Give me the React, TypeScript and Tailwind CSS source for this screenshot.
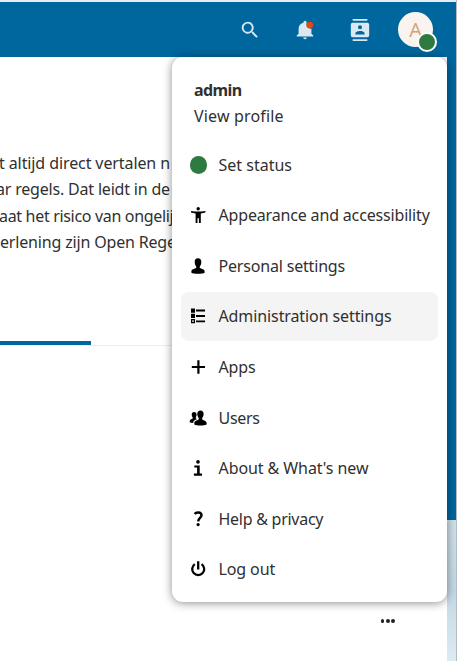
import React from "react";

type Item = { label: string; icon: React.ReactNode; text: string; active?: boolean };

const svg = (children: React.ReactNode) => (
  <svg viewBox="0 0 16 16" className="h-4 w-4 overflow-visible" fill="black">
    {children}
  </svg>
);

const items: Item[] = [
  { label: "Set status", text: "tracking-[0px]", icon: <span className="ml-px block h-[17.5px] w-[17.5px] rounded-full bg-[#2d7b41]" /> },
  {
    label: "Appearance and accessibility",
    text: "tracking-[-0.165px]",
    icon: svg(
      <>
        <circle cx="8.2" cy="1.7" r="1.7" />
        <path d="M1 3.900Q8.200 5.200 15.400 3.900V5.400L10.800 6.400V16H8.900V11.200H7.500V16H5.600V6.400L1 5.400Z" />
      </>,
    ),
  },
  {
    label: "Personal settings",
    text: "tracking-[-0.18px]",
    icon: svg(<path d="M8 .2C5.8.2 4.700 1.600 4.700 3.700c0 2 .5 3.700 1.500 4.800v1.600C4.500 11 1.400 11.400 1.400 13.400v1.300C3 16.100 13 16.100 14.600 14.700v-1.300c0-2-3.100-2.400-4.800-3.300V8.500c1-1.100 1.500-2.800 1.500-4.800C11.300 1.600 10.200.2 8 .2Z" />),
  },
  {
    label: "Administration settings",
    text: "tracking-[-0.1px]",
    active: true,
    icon: svg(
      <>
        <path d="M1 .5h4v4.200H1zM1 5.800h4V10H1zM6 1.600H15v1.900H6zM6 7H15v1.900H6zM6 12.400H15v1.900H6z" />
        <path d="M1.650 11.700h2.700v3H1.650z" fill="none" stroke="black" strokeWidth="1.300" />
      </>,
    ),
  },
  { label: "Apps", text: "tracking-[-0.1px]", icon: svg(<path d="M7.300 1.200h2.200V6.900H15V9.100H9.500v5.700H7.300V9.100H1.800V6.900H7.300Z" />) },
  {
    label: "Users",
    text: "tracking-[-0.3px]",
    icon: svg(
      <>
        <path d="M10.400.5C8.300.5 7.300 1.800 7.300 3.700c0 1.800.5 3.200 1.400 4.200v1.700C7 10.500 4.300 11 4.300 13v1.400c2.500 1.300 9.700 1.300 12.300 0V13c0-2-2.800-2.500-4.400-3.400V7.900c.9-1 1.400-2.400 1.400-4.200 0-1.900-1.100-3.200-3.200-3.200Z" />
        <path d="M3.900 2C2.500 2 1.700 3 1.700 4.400c0 1.300.4 2.300 1 3v1.200C1.500 9.300-.3 9.800-.3 11.200v1c.8.5 2 .7 3.400.8.200-2 1.800-3 4-3.900L5.800 8.600V7.400c.4-.6.700-1.400.8-2.300C6.700 3 5.700 2 3.900 2Z" />
      </>,
    ),
  },
  {
    label: "About & What's new",
    text: "tracking-[-0.08px]",
    icon: svg(
      <>
        <circle cx="8" cy="1.900" r="1.800" />
        <path d="M4.300 5.400h5.400v8.100h2.300v2.200H3.900v-2.200h3.200v-5.900H4.300Z" />
      </>,
    ),
  },
  {
    label: "Help & privacy",
    text: "tracking-[-0.26px]",
    icon: svg(
      <>
        <path d="M4.700 3C5.500 1.900 7 1.500 8.500 1.600c2 .1 3.100 1 3 2.800-.1 2.400-3.100 2.600-3.300 5.900" fill="none" stroke="black" strokeWidth="2.500" />
        <circle cx="8.100" cy="13.600" r="1.600" />
      </>,
    ),
  },
  {
    label: "Log out",
    text: "tracking-[-0.12px]",
    icon: svg(<path d="M8.200 .3V8.500M4.800 3.100A6 6 0 1 0 11.600 3.100" fill="none" stroke="black" strokeWidth="2.300" />),
  },
];

export default function App() {
  return (
    <div className="relative flex h-[661px] w-[457px] flex-col overflow-hidden bg-white font-['Noto_Sans','Open_Sans',sans-serif] text-[#303030]">
      <div className="h-[2px] shrink-0 bg-[#e6eef2]" />
      <header className="flex h-[55px] shrink-0 items-center bg-[#00679e] pl-[239px]">
        <svg viewBox="0 0 24 24" className="h-[22px] w-[22px]" fill="#d9e8f1">
          <path d="M9.500 3a6.500 6.500 0 0 1 4.940 10.730l.27.270h.790l5 5-1.500 1.500-5-5v-.790l-.270-.270A6.500 6.500 0 1 1 9.500 3m0 2a4.500 4.500 0 1 0 0 9 4.500 4.500 0 0 0 0-9Z" />
        </svg>
        <svg viewBox="0 0 24 24" className="ml-[33px] h-[22px] w-[22px]" fill="#d9e8f1">
          <path d="M21 18v1.200H3V18l2-2v-5.500C5 7.400 7.300 4.900 10.300 4.200V3.500a1.700 1.700 0 0 1 3.400 0v.7A5.200 5.200 0 0 0 19 10.600V16Z" />
          <path d="M10 20.200h4a2 2 0 0 1-4 0Z" />
          <circle cx="17.200" cy="6.600" r="3.700" fill="#dd4a16" />
        </svg>
        <svg viewBox="0 0 24 24" className="ml-[33px] h-[22px] w-[22px]" fill="#d9e8f1">
          <path fillRule="evenodd" d="M4 0h16v2H4zM4 22h16v2H4zM4 4h16a2 2 0 0 1 2 2v12a2 2 0 0 1-2 2H4a2 2 0 0 1-2-2V6a2 2 0 0 1 2-2Zm8 2.750a2.250 2.250 0 1 0 0 4.500 2.250 2.250 0 0 0 0-4.500ZM17 17v-1.500c0-1.670-3.330-2.500-5-2.500s-5 .830-5 2.500V17Z" />
        </svg>
        <div className="relative ml-[27px] flex h-[35px] w-[35px] items-center justify-center rounded-full bg-[#faf4f1] text-[20px] text-[#d2a373]">
          <span className="font-['Open_Sans',sans-serif] leading-none">A</span>
          <span className="absolute left-[19px] top-[20px] h-5 w-5 rounded-full border-2 border-white bg-[#2d7b41]" />
        </div>
      </header>
      <div className="flex min-h-0 flex-1">
        <main className="flex w-[447px] flex-col">
          <div className="mt-[93px] h-[106px] whitespace-nowrap text-[16px] leading-[26.400px]">
            <p className="-ml-px tracking-[-0.1px]">t altijd direct vertalen n</p>
            <p className="-ml-[4px] tracking-[-0.19px]">ar regels. Dat leidt in de</p>
            <p className="-ml-px tracking-[-0.32px]">aat het risico van ongelijke</p>
            <p className="tracking-[-0.17px]">erlening zijn Open Regels</p>
          </div>
          <div className="mt-[85px] h-[5px] border-b border-[#ededed]">
            <div className="h-1 w-[91px] bg-[#00679e]" />
          </div>
          <div className="mt-[273px] ml-[380.500px] flex gap-[1.700px]">
            <span className="h-[3.800px] w-[3.800px] rounded-full bg-[#222]" />
            <span className="h-[3.800px] w-[3.800px] rounded-full bg-[#222]" />
            <span className="h-[3.800px] w-[3.800px] rounded-full bg-[#222]" />
          </div>
        </main>
        <aside className="flex flex-1 flex-col">
          <div className="h-[463px] bg-[#00679e]" />
          <div className="flex-1 rounded-tl-[3px] bg-linear-to-b from-[#cfe0ea] via-[#c2d8e5] to-[#dcebf3]" />
        </aside>
      </div>
      <nav className="absolute left-[172px] top-[57px] h-[545px] w-[275px] rounded-[11px] bg-white px-[9px] shadow-[0_1px_10px_rgba(0,0,0,0.45)]">
        <div className="h-[83.500px] pl-[13px] pt-5 text-[16px] leading-[26px]">
          <div className="font-bold tracking-[-0.600px]"><span>admin</span></div>
          <div className="tracking-[0.170px]"><span>View profile</span></div>
        </div>
        <ul className="flex flex-col gap-[2px]">
          {items.map((it) => (
            <li key={it.label} className={`flex h-[48.560px] items-center rounded-[8px] ${it.active ? "bg-[#f4f4f4]" : ""}`}>
              <span className="flex w-[34px] shrink-0 justify-center">{it.icon}</span>
              <span className={`ml-[3.500px] whitespace-nowrap text-[16px] ${it.text}`}>{it.label}</span>
            </li>
          ))}
        </ul>
      </nav>
      <div className="absolute right-0 top-0 h-full w-px bg-[#b5bdc2]" />
    </div>
  );
}
